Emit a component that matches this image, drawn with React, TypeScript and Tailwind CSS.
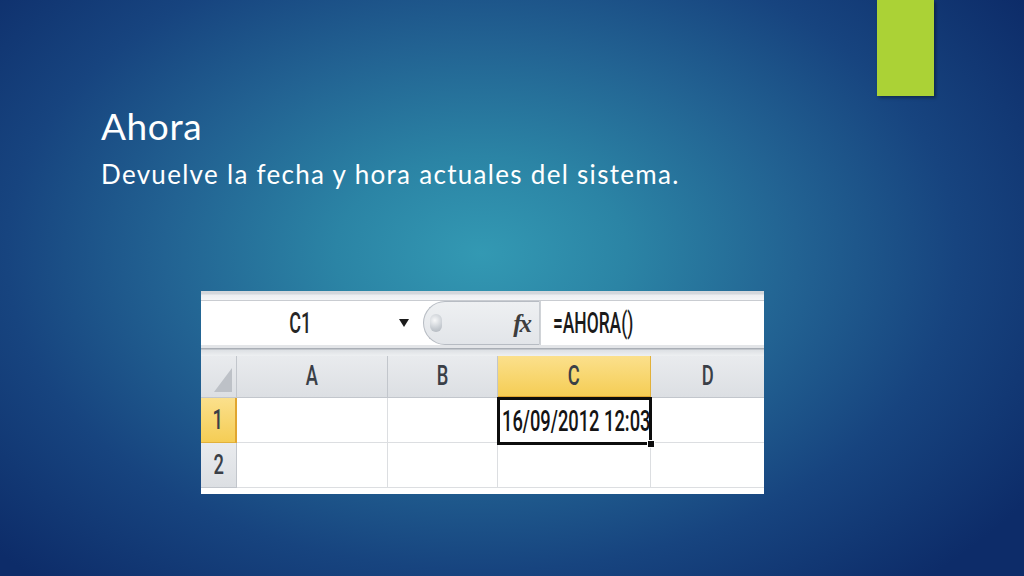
import React from "react";

const headerText = "font-['Roboto','Liberation_Sans',sans-serif] text-[27px] font-medium text-[#3a3f47] inline-block scale-x-[0.68] leading-none";

export default function App() {
  return (
    <div className="relative w-[1024px] h-[576px] overflow-hidden bg-[radial-gradient(ellipse_660px_440px_at_47%_44%,#3399b3_0%,#2b84a5_22%,#226292_48%,#17447f_72%,#0d2c69_100%)] font-['Lato','Open_Sans',sans-serif]">
      {/* decorative accent bar */}
      <div className="absolute top-0 left-[877px] w-[57px] h-[96px] bg-[#abd236] shadow-[2px_2px_3px_rgba(0,0,0,0.35)]" />

      <div className="flex flex-col pl-[101px] pt-[103px]">
        <h1 className="text-[37px] leading-[46px] font-normal text-white tracking-[0.6px]">Ahora</h1>
        <p className="mt-[8px] text-[26px] leading-[34px] font-normal text-white tracking-[1.3px]">
          Devuelve la fecha y hora actuales del sistema.
        </p>

        {/* spreadsheet picture */}
        <div className="ml-[100px] mt-[100px] w-[563px] h-[203px] flex flex-col bg-white">
          {/* top strip */}
          <div className="h-[10px] bg-[linear-gradient(#d3d7dc_0px,#d3d7dc_3px,#eceef1_4px,#f4f5f7_100%)] border-b border-[#c9ccd1]" />
          {/* formula bar */}
          <div className="h-[44px] flex bg-white">
            <div className="w-[222px] flex items-center relative">
              <div className="flex-1 flex justify-center pl-[0px]">
                <span className="font-['Roboto','Liberation_Sans',sans-serif] text-[30px] font-medium text-[#262626] inline-block scale-x-[0.6] leading-none">C1</span>
              </div>
              <div className="w-[24px] flex justify-start">
                <div className="w-0 h-0 border-l-[5px] border-r-[5px] border-t-[8px] border-l-transparent border-r-transparent border-t-[#1b1b1b]" />
              </div>
            </div>
            <div className="w-[117px] h-[44px] flex items-center rounded-l-[22px] bg-[linear-gradient(#eef0f2,#e2e5e9)] border border-[#b7bcc3] border-r-[#c9cdd2]">
              <div className="ml-[6px] w-[12px] h-[18px] rounded-full bg-[radial-gradient(circle_at_40%_35%,#f7f8f9_0%,#c7ccd2_60%,#aeb4bb_100%)]" />
              <div className="flex-1 flex justify-end pr-[9px]">
                <span className="font-['Liberation_Serif',serif] italic font-bold text-[25px] text-[#3d3d3d] leading-none tracking-[-2px]">fx</span>
              </div>
            </div>
            <div className="flex-1 flex items-center pl-[12px] border-l border-[#d0d3d7]">
              <span className="font-['Roboto','Liberation_Sans',sans-serif] text-[30px] font-medium text-[#1a1a1a] inline-block origin-left scale-x-[0.58] leading-none">=AHORA()</span>
            </div>
          </div>
          {/* gap strip */}
          <div className="h-[11px] bg-[linear-gradient(#e3e5e8_0px,#e3e5e8_3px,#a9aeb5_3px,#a9aeb5_4px,#dde0e4_5px,#eef0f2_100%)]" />
          {/* grid */}
          <div className="grid grid-cols-[36px_151px_110px_153px_113px] grid-rows-[42px_45px_45px]">
            {/* header row */}
            <div className="relative bg-[linear-gradient(#e9ebee,#dcdfe3)] border-r border-b border-[#c2c6cc]">
              <svg className="absolute left-[13px] top-[12px]" width="18" height="24" viewBox="0 0 18 24">
                <polygon points="18,0 18,24 0,24" fill="#bdc1c7" />
              </svg>
            </div>
            <div className="flex items-center justify-center bg-[linear-gradient(#e9ebee,#dcdfe3)] border-r border-b border-[#c2c6cc]">
              <span className={headerText}>A</span>
            </div>
            <div className="flex items-center justify-center bg-[linear-gradient(#e9ebee,#dcdfe3)] border-r border-b border-[#c2c6cc]">
              <span className={headerText}>B</span>
            </div>
            <div className="flex items-center justify-center bg-[linear-gradient(#fbe08c,#f5cd55)] border-r border-b-2 border-r-[#e2b13a] border-b-[#e0a52f]">
              <span className={headerText}>C</span>
            </div>
            <div className="flex items-center justify-center bg-[linear-gradient(#e9ebee,#dcdfe3)] border-b border-[#c2c6cc]">
              <span className={headerText}>D</span>
            </div>

            {/* row 1 */}
            <div className="flex items-center justify-center bg-[linear-gradient(#fbe08c,#f5cd55)] border-r-2 border-b border-r-[#e0a52f] border-b-[#e2b13a]">
              <span className={headerText}>1</span>
            </div>
            <div className="border-r border-b border-[#dcdee1]" />
            <div className="border-r border-b border-[#dcdee1]" />
            <div className="relative border-[3px] border-[#0d0d0d] -ml-[1px] -mt-[1px] w-[155px] h-[48px] z-10 flex items-center pl-[2px]">
              <span className="font-['Roboto','Liberation_Sans',sans-serif] text-[30px] font-medium text-[#141414] inline-block origin-left scale-x-[0.61] leading-none whitespace-nowrap">16/09/2012 12:03</span>
              <div className="absolute -right-[6px] -bottom-[6px] w-[8px] h-[8px] bg-[#0d0d0d] border border-white" />
            </div>
            <div className="border-b border-[#dcdee1]" />

            {/* row 2 */}
            <div className="flex items-center justify-center bg-[linear-gradient(#e9ebee,#dcdfe3)] border-r border-b border-[#c2c6cc]">
              <span className={headerText}>2</span>
            </div>
            <div className="border-r border-b border-[#dcdee1]" />
            <div className="border-r border-b border-[#dcdee1]" />
            <div className="border-r border-b border-[#dcdee1]" />
            <div className="border-b border-[#dcdee1]" />
          </div>
          <div className="flex-1 bg-white" />
        </div>
      </div>
    </div>
  );
}
